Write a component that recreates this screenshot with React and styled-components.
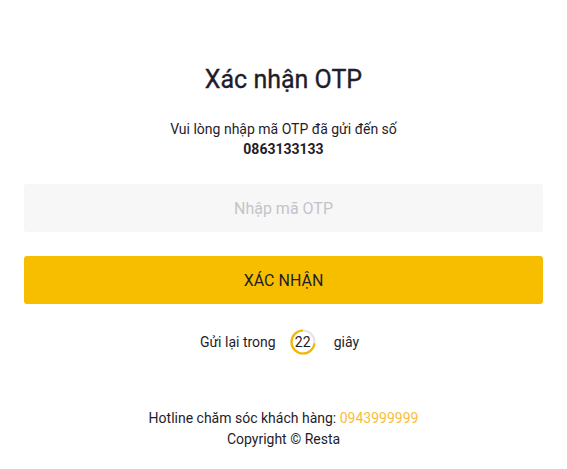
import React from 'react'
import styled, { createGlobalStyle } from 'styled-components'

const GlobalStyle = createGlobalStyle`
  html, body {
    margin: 0;
    padding: 0;
    background: #fff;
  }
  body {
    font-family: Roboto, "Noto Sans", sans-serif;
    color: #1f1d2b;
  }
`

const Page = styled.div`
  display: flex;
  flex-direction: column;
  min-height: 469px;
  padding: 0 24px;
  box-sizing: border-box;
`

const Main = styled.div`
  display: flex;
  flex-direction: column;
  padding-top: 64px;
`

const Title = styled.h1`
  margin: 0;
  font-size: 25px;
  line-height: 32px;
  font-weight: 400;
  -webkit-text-stroke: 0.35px #1f1d2b;
  text-align: center;
`

const Subtitle = styled.p`
  margin: 23px 0 0;
  font-size: 14px;
  line-height: 20px;
  text-align: center;
`

const Phone = styled.strong`
  display: block;
  font-weight: 700;
`

const OtpInput = styled.input`
  box-sizing: border-box;
  margin-top: 25px;
  height: 48px;
  padding: 0 12px;
  border: none;
  border-radius: 3px;
  background: #f7f7f7;
  font-family: inherit;
  font-size: 16px;
  text-align: center;
  color: #1f1d2b;
  caret-color: #1f1d2b;
  outline: none;
  &::placeholder {
    color: #c4c4c8;
  }
`

const SubmitButton = styled.button`
  box-sizing: border-box;
  margin-top: 24px;
  height: 48px;
  padding: 0;
  border: none;
  border-radius: 3px;
  background: #f7be00;
  font-family: inherit;
  font-size: 16px;
  font-weight: 400;
  color: #1f1d2b;
  text-transform: uppercase;
  cursor: pointer;
`

const ResendRow = styled.div`
  margin-top: 24px;
  padding-right: 8px;
  display: flex;
  align-items: center;
  justify-content: center;
  font-size: 14px;
  height: 28px;
`

const Countdown = styled.div`
  position: relative;
  width: 26px;
  height: 26px;
  margin: 0 18px 0 14px;
  display: flex;
  align-items: center;
  justify-content: center;
  font-size: 14px;
`

const Ring = styled.svg`
  position: absolute;
  inset: 0;
`

const Footer = styled.footer`
  margin-top: auto;
  padding-bottom: 19px;
  text-align: center;
  font-size: 14px;
  line-height: 21px;
`

const Hotline = styled.span`
  color: #f9bd3a;
`

const CountdownRing = ({ value, total }) => {
  const r = 11.5
  const c = 2 * Math.PI * r
  const done = c * (1 - value / total)
  return (
    <Countdown>
      <Ring width="26" height="26" viewBox="0 0 26 26">
        <circle cx="13" cy="13" r={r} fill="none" stroke="#e3e3e3" strokeWidth="2" />
        <circle
          cx="13"
          cy="13"
          r={r}
          fill="none"
          stroke="#f2b900"
          strokeWidth="2.2"
          strokeDasharray={`${c - done} ${c}`}
          strokeDashoffset={-done}
          transform="rotate(-90 13 13)"
        />
      </Ring>
      {value}
    </Countdown>
  )
}

const App = () => {
  return (
    <>
      <GlobalStyle />
      <Page>
        <Main>
          <Title>Xác nhận OTP</Title>
          <Subtitle>
            Vui lòng nhập mã OTP đã gửi đến số
            <Phone>0863133133</Phone>
          </Subtitle>
          <OtpInput placeholder="Nhập mã OTP" autoFocus />
          <SubmitButton>Xác nhận</SubmitButton>
          <ResendRow>
            Gửi lại trong
            <CountdownRing value={22} total={30} />
            giây
          </ResendRow>
        </Main>
        <Footer>
          <div>
            Hotline chăm sóc khách hàng: <Hotline>0943999999</Hotline>
          </div>
          <div>Copyright © Resta</div>
        </Footer>
      </Page>
    </>
  )
}

export default App
